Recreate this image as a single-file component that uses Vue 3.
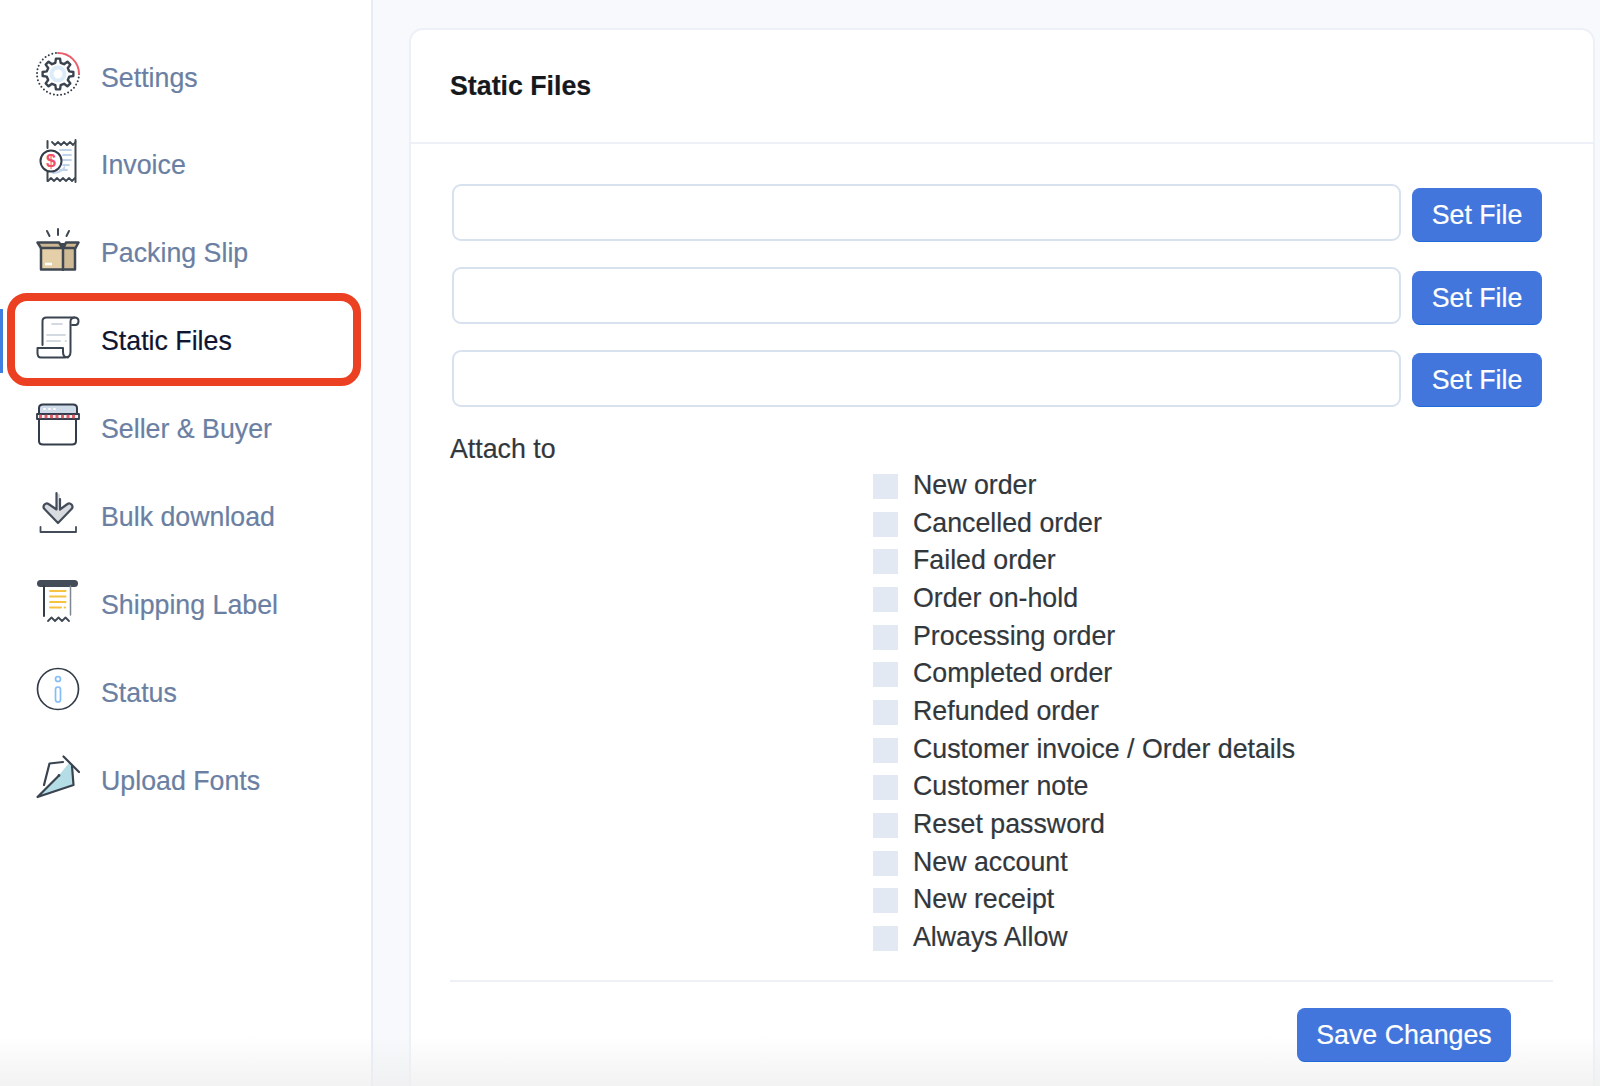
<script setup>
const nav = ['Settings', 'Invoice', 'Packing Slip', 'Static Files', 'Seller & Buyer', 'Bulk download', 'Shipping Label', 'Status', 'Upload Fonts']
const options = ['New order', 'Cancelled order', 'Failed order', 'Order on-hold', 'Processing order', 'Completed order', 'Refunded order', 'Customer invoice / Order details', 'Customer note', 'Reset password', 'New account', 'New receipt', 'Always Allow']

function gearPath(cx, cy, outer, inner, teeth) {
  const step = (Math.PI * 2) / teeth
  const pts = []
  for (let i = 0; i < teeth; i++) {
    const a = i * step - Math.PI / 2
    const w = step * 0.17
    const v = step * 0.3
    for (const [r, o] of [[inner, -v], [outer, -w], [outer, w], [inner, v]]) {
      pts.push(`${(cx + r * Math.cos(a + o)).toFixed(2)} ${(cy + r * Math.sin(a + o)).toFixed(2)}`)
    }
  }
  return 'M' + pts.join('L') + 'Z'
}
const gear = gearPath(22, 22, 15.5, 11.5, 8)
</script>

<template>
  <div class="page">
    <aside class="sidebar">
      <div v-for="name in nav" :key="name" class="nav-row" :class="{ active: name === 'Static Files' }">
        <svg class="icon" viewBox="0 0 44 44" fill="none" stroke-linecap="round" stroke-linejoin="round">
          <template v-if="name === 'Settings'">
            <path d="M43 22A21 21 0 1 1 22 1" stroke="#333c48" stroke-width="2" stroke-dasharray="0 3.7" />
            <path d="M22 1A21 21 0 0 1 43 22" stroke="#e8606c" stroke-width="2" />
            <path :d="gear" stroke="#3a4350" stroke-width="2.4" fill="#fff" />
            <circle cx="22" cy="22" r="6.5" stroke="#dcecf9" stroke-width="4" />
          </template>
          <template v-else-if="name === 'Invoice'">
            <path d="M11.5 2V9M11.5 33V42M39.5 1V43" stroke="#3f4852" stroke-width="2" />
            <path d="M16 3l3 3 3-3 3 3 3-3 3 3 3-3 3 3 2.5-3" stroke="#3f4852" stroke-width="1.8" />
            <path d="M12 42l3-3 3 3 3-3 3 3 3-3 3 3 3-3 3 3 3-3" stroke="#3f4852" stroke-width="1.8" />
            <path d="M24 11H35M27 16H35M27 21H35M27 26H33M24 31H31" stroke="#a9c4e4" stroke-width="1.7" />
            <path d="M17 33Q26 32 29 26V30Q24 35 16 35Z" fill="#c3d6ec" />
            <circle cx="15" cy="22" r="10.5" fill="#fff" stroke="#333c48" stroke-width="2" />
            <text x="15" y="28" class="dollar" text-anchor="middle">$</text>
          </template>
          <template v-else-if="name === 'Packing Slip'">
            <path d="M22 2V8M11 4L13.5 9M33 4L30.5 9" stroke="#3f4852" stroke-width="2" />
            <path d="M5 21H27V43H5Z" fill="#e4cfa9" />
            <path d="M27 21H39V43H27Z" fill="#cfba96" />
            <path d="M5 21V42.5H39V21M27 21V43" stroke="#3f4852" stroke-width="2.5" />
            <path d="M1.5 15.5H23L26.5 21H5Z" fill="#cdb792" stroke="#3f4852" stroke-width="2.5" />
            <path d="M42.5 15.5H30L27.5 21H39.5Z" fill="#cdb792" stroke="#3f4852" stroke-width="2.5" />
            <path d="M24 16H30L27 21Z" fill="#3f4852" />
            <path d="M9 37H16" stroke="#fff" stroke-width="2.5" stroke-linecap="butt" />
          </template>
          <template v-else-if="name === 'Static Files'">
            <path d="M6.5 30V6Q6.5 2.5 10.5 2.5H38.5Q42.5 2.500 42.5 6Q42.5 9.5 40 10H36" stroke="#3a4350" stroke-width="2" />
            <path d="M38.5 2.5Q34.5 3 34.5 6.5V37Q34.5 42.5 29 42.5H5Q1.5 42.5 1.5 38V33H27V37Q27 42.5 32 42.5" stroke="#3a4350" stroke-width="2" />
            <path d="M16 9H26M11 20H29M11 26H24M29.5 26H30" stroke="#d3d9e0" stroke-width="1.8" />
          </template>
          <template v-else-if="name === 'Seller & Buyer'">
            <path d="M3 12V5Q3 1.5 7 1.5H37Q41 1.5 41 5V12Z" fill="#cfdbe9" stroke="#333c4a" stroke-width="2" />
            <path d="M8 6H9M13 6H14M18 6H19" stroke="#fff" stroke-width="1.8" />
            <path d="M3 16V38Q3 41.5 7 41.5H36Q40 41.5 40 38V16" stroke="#333c4a" stroke-width="2" />
            <path d="M1 11H43V16H1Z" fill="#f3f3f3" stroke="#333c4a" stroke-width="1.8" />
            <path d="M3 13.5H41" stroke="#e0606e" stroke-width="3.5" stroke-dasharray="3 2.5" stroke-linecap="butt" />
          </template>
          <template v-else-if="name === 'Bulk download'">
            <path d="M20 3V18.5L12.5 13Q10.5 11.5 8.5 13.5Q6.5 16 8.5 18L22 32L35.5 18Q37.5 16 35.5 13.5Q33.5 11.5 31.5 13L24 18.5V3H20Z" fill="#d8dbe0" />
            <path d="M20.5 2V18.5L12.5 13Q10.5 11.5 8.5 13.5Q6.5 16 8.5 18L22 32L35.5 18Q37.5 16 35.5 13.5Q33.5 11.5 31.5 13L24 18.5V8" stroke="#434c58" stroke-width="2.2" />
            <path d="M4.5 36V41H40V36" stroke="#434c58" stroke-width="1.8" />
          </template>
          <template v-else-if="name === 'Shipping Label'">
            <rect x="1" y="1" width="41" height="7" rx="3.5" fill="#434c58" />
            <path d="M8 7V37" stroke="#333c48" stroke-width="2" />
            <path d="M34.5 7V36" stroke="#7e8791" stroke-width="1.5" />
            <path d="M12 42l3.5-3.5 3.5 3.5 3.5-3.5 3.5 3.5 3.5-3.5 3.5 3.5" stroke="#3f4852" stroke-width="1.8" />
            <path d="M14 12H29.5M14 17.500H29.5M14 23H29.5M14 28.5H25M28.5 28.5H29" stroke="#f6c23f" stroke-width="2" />
          </template>
          <template v-else-if="name === 'Status'">
            <circle cx="22" cy="22" r="20.5" stroke="#333c48" stroke-width="1.7" />
            <circle cx="22" cy="12" r="2.5" stroke="#84bdf9" stroke-width="1.7" />
            <rect x="19.5" y="20" width="5" height="15" rx="2.5" stroke="#84bdf9" stroke-width="1.7" />
          </template>
          <template v-else-if="name === 'Upload Fonts'">
            <path d="M1.5 42L22 21.5L33 8L36 10.5L37.5 30Z" fill="#b5dde6" />
            <path d="M8 30L13.5 8.5L27 7" stroke="#3a4350" stroke-width="2.2" />
            <path d="M27.5 1.5L43 17" stroke="#3a4350" stroke-width="2.2" />
            <path d="M36 11L37.5 30L1.5 42L22 21.5" stroke="#3a4350" stroke-width="2.2" />
            <circle cx="23" cy="20.5" r="1.4" fill="#3a4350" />
          </template>
        </svg>
        <span class="nav-label">{{ name }}</span>
      </div>
    </aside>

    <main class="main">
      <section class="card">
        <header class="card-head">
          <h1 class="title">Static Files</h1>
        </header>
        <div class="card-body">
          <div v-for="n in 3" :key="n" class="file-row">
            <input class="file-input" type="text" />
            <button class="btn set-btn" type="button">Set File</button>
          </div>
          <div class="attach-label">Attach to</div>
          <div class="options">
            <label v-for="o in options" :key="o" class="option">
              <span class="check"></span>
              <span>{{ o }}</span>
            </label>
          </div>
          <div class="footer">
            <button class="btn save-btn" type="button">Save Changes</button>
          </div>
        </div>
      </section>
    </main>
    <div class="vignette"></div>
  </div>
</template>

<style scoped>
.page {
  position: relative;
  display: flex;
  width: 1600px;
  height: 1086px;
  overflow: hidden;
  background: #f7f9fc;
  font-family: "Liberation Sans", Arial, sans-serif;
  font-size: 26.75px;
  color: #32373c;
  -webkit-text-stroke: 0.2px;
}
.sidebar {
  flex: none;
  box-sizing: border-box;
  width: 373px;
  padding-top: 32.6px;
  background: #fff;
  border-right: 2px solid #e6ebf5;
}
.nav-row {
  position: relative;
  display: flex;
  align-items: center;
  height: 87.9px;
  padding-left: 36px;
  color: #6b7fa3;
}
.nav-row.active {
  color: #0f1530;
}
.nav-row.active::before {
  content: "";
  position: absolute;
  left: 0;
  top: 12.5px;
  width: 3px;
  height: 64px;
  background: #3f7fe0;
}
.nav-row.active::after {
  content: "";
  position: absolute;
  left: 7px;
  top: -3.5px;
  width: 354px;
  height: 93px;
  box-sizing: border-box;
  border: 8px solid #ec4023;
  border-radius: 20px;
}
.icon {
  flex: none;
  width: 44px;
  height: 44px;
  margin-bottom: 6px;
}
.nav-label {
  margin-left: 21px;
  padding-top: 3px;
}
.dollar {
  font-family: "Liberation Sans", Arial, sans-serif;
  font-size: 18px;
  font-weight: 700;
  fill: #f0506e;
  -webkit-text-stroke: 0;
}
.main {
  flex: 1;
  min-width: 0;
  padding: 28px 5px 0 36px;
}
.card {
  box-sizing: border-box;
  height: 1200px;
  background: #fff;
  border: 2px solid #edf1f7;
  border-radius: 14px;
}
.card-head {
  box-sizing: border-box;
  height: 114px;
  padding-left: 39px;
  display: flex;
  align-items: center;
  border-bottom: 2px solid #edf1f7;
}
.title {
  margin: 0;
  font-size: 26.75px;
  font-weight: 700;
  color: #15191d;
}
.card-body {
  padding: 40px 40px 0 39px;
}
.file-row {
  display: flex;
  align-items: flex-start;
  gap: 11px;
  height: 83px;
  margin-left: 2px;
}
.file-input {
  box-sizing: border-box;
  width: 949px;
  height: 57px;
  background: #fff;
  border: 2px solid #d8e2ef;
  border-radius: 9px;
}
.btn {
  box-sizing: border-box;
  height: 54px;
  padding: 1px 0 0;
  background: #4276dc;
  color: #fff;
  font: inherit;
  border: 1px solid #4276dc;
  border-bottom-color: #1f6ad8;
  border-radius: 8px;
}
.set-btn {
  width: 130px;
  margin-top: 4px;
}
.file-row:nth-child(3) .set-btn {
  margin-top: 3px;
}
.attach-label {
  margin-top: -4px;
  height: 40px;
  line-height: 40px;
}
.options {
  display: flex;
  flex-direction: column;
  padding-left: 423px;
  margin-top: 5px;
}
.option {
  display: flex;
  align-items: flex-start;
  gap: 15px;
  height: 37.67px;
  line-height: 22px;
}
.check {
  flex: none;
  width: 25px;
  height: 25px;
  background: #e3e9f3;
}
.footer {
  display: flex;
  justify-content: flex-end;
  margin-top: 16px;
  padding: 26px 42px 0 0;
  border-top: 2px solid #edf1f7;
}
.save-btn {
  position: relative;
  z-index: 2;
  width: 214px;
}
.vignette {
  position: absolute;
  left: 0;
  right: 0;
  bottom: 0;
  height: 50px;
  background: linear-gradient(to bottom, rgba(238, 238, 238, 0), rgba(238, 238, 238, 0.75));
  pointer-events: none;
}
</style>
